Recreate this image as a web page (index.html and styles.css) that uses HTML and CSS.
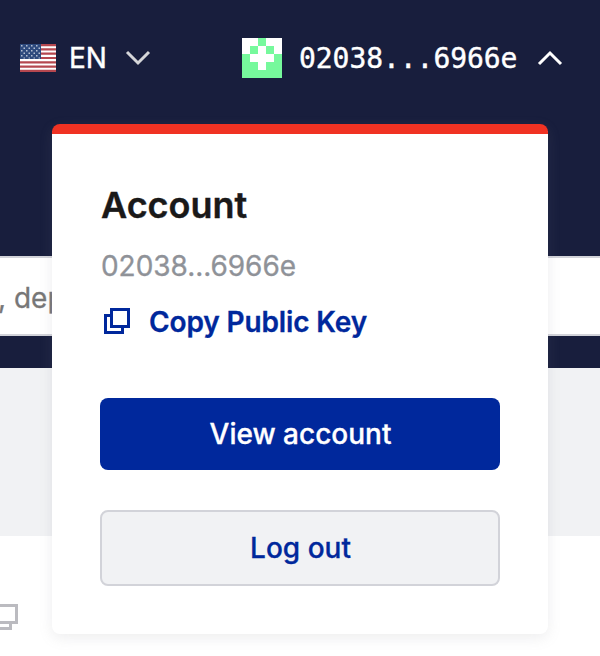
FILE: index.html
```html
<!DOCTYPE html>
<html lang="en">
<head>
<meta charset="utf-8">
<title>Account</title>
<link rel="stylesheet" href="styles.css">
</head>
<body>
<header class="hero">
  <nav class="nav">
    <div class="lang">
      <svg class="flag" width="36" height="28" viewBox="0 0 36 28">
        <defs>
          <pattern id="stars" width="5" height="5" patternUnits="userSpaceOnUse">
            <path d="M1 1h1.5v1.5H1zM3.5 3.5H5V5H3.500z" fill="#b5c0d3"/>
          </pattern>
        </defs>
        <rect width="36" height="28" fill="#fff"/>
        <path d="M0 1.080h36M0 5.380h36M0 9.690h36M0 14h36M0 18.310h36M0 22.620h36M0 26.920h36" stroke="#b5474f" stroke-width="2.150"/>
        <rect width="21" height="15" fill="#2e4a7d"/>
        <rect width="20" height="14.500" fill="url(#stars)"/>
      </svg>
      <span class="code">EN</span>
      <svg class="chevron" width="26" height="16" viewBox="0 0 26 16"><path d="M2 2l11 11L24 2" fill="none" stroke="#d5d6d9" stroke-width="3"/></svg>
    </div>
    <div class="user">
      <svg width="40" height="40" viewBox="0 0 5 5" shape-rendering="crispEdges"><path d="M0 0h5v5H0z" fill="#76f99c"/><path d="M0 0h2v1H1v1H0zM3 0h2v2H4V1H3zM2 1h1v1h1v1H3v1H2V3H1V2h1z" fill="#fff"/></svg>
      <span class="hash">02038...6966e</span>
      <svg class="chevron-up" width="26" height="16" viewBox="0 0 26 16"><path d="M2 14L13 3l11 11" fill="none" stroke="#fff" stroke-width="3"/></svg>
    </div>
  </nav>
  <div class="search">, deploy</div>
</header>
<section class="band"></section>
<section class="row">
  <svg width="28" height="28" viewBox="0 0 28 28"><path d="M8.500 1.500h18v17h-18zM8.500 7.500h-7v17h19v-6" fill="none" stroke="#bbbbc0" stroke-width="3"/></svg>
</section>
<aside class="menu">
  <h1 class="title">Account</h1>
  <p class="key">02038...6966e</p>
  <a class="copy">
    <svg class="copy-icon" width="26" height="26" viewBox="0 0 26 26"><path d="M7.500 1.500h17v17h-17zM6 7.500H1.500v17h17V20" fill="none" stroke="#00289c" stroke-width="3"/></svg>
    <span class="copy-text">Copy Public Key</span>
  </a>
  <button class="button primary"><span>View account</span></button>
  <button class="button secondary"><span>Log out</span></button>
</aside>
</body>
</html>
```

FILE: styles.css
```css
* { box-sizing: border-box; }
body {
  margin: 0;
  height: 656px;
  position: relative;
  overflow: hidden;
  background: #fff;
  font: 28px/36px Inter, "Liberation Sans", sans-serif;
}
.hero { height: 368px; background: #181e3d; }
.nav {
  height: 256px;
  padding: 38px 37px 0 20px;
  display: flex;
  justify-content: space-between;
  align-items: flex-start;
  color: #fff;
}
.lang, .user { display: flex; align-items: center; height: 40px; }
.code { margin-left: 13px; width: 38px; -webkit-text-stroke: .4px; }
.chevron { margin-left: 18px; }
.code, .hash { white-space: nowrap; }
.hash {
  margin: 2px 18px 0 17px;
  width: 220px;
  font-family: "DejaVu Sans Mono", monospace;
  letter-spacing: -0.060px;
  -webkit-text-stroke: .4px;
}
.search {
  height: 80px;
  padding: 22px 0 0;
  border: solid #d2d3d9;
  border-width: 2px 0;
  background: #fff;
  color: #777;
  text-indent: -2px;
  -webkit-text-stroke: .3px;
}
.band { height: 168px; background: #f1f2f4; }
.row { height: 120px; padding: 68px 0 0; }
.row svg { display: block; margin-left: -10px; }
.menu {
  position: absolute;
  left: 52px;
  top: 124px;
  width: 496px;
  height: 510px;
  padding: 49px 48px 0;
  border-top: 10px solid #f03223;
  border-radius: 8px;
  background: #fff;
  box-shadow: 0 4px 14px rgba(132, 134, 140, .14);
}
.title {
  margin: 0 0 0 1px;
  font-size: 36px;
  line-height: 44px;
  font-weight: 600;
  color: #1a1919;
  -webkit-text-stroke: .4px;
}
.key { margin: 21px 0 0 1px; color: #8f9298; letter-spacing: -.05px; -webkit-text-stroke: .3px; }
.copy {
  display: flex;
  align-items: center;
  height: 36px;
  margin: 20px 0 58px 4px;
  color: #00289c;
  font-weight: 600;
}
.copy-icon { margin-bottom: 2px; }
.copy-text { margin-left: 19px; letter-spacing: -.13px; -webkit-text-stroke: .3px; }
.button {
  display: block;
  width: 400px;
  padding: 0 0 0 1px;
  font: 500 28px/36px Inter, "Liberation Sans", sans-serif;
  border-radius: 8px;
  -webkit-text-stroke: .3px;
}
.primary { height: 72px; border: 0; background: #00289c; color: #fff; }
.secondary {
  height: 76px;
  margin-top: 40px;
  border: 2px solid #d2d3d9;
  background: #f1f2f4;
  color: #00289c;
}
```
